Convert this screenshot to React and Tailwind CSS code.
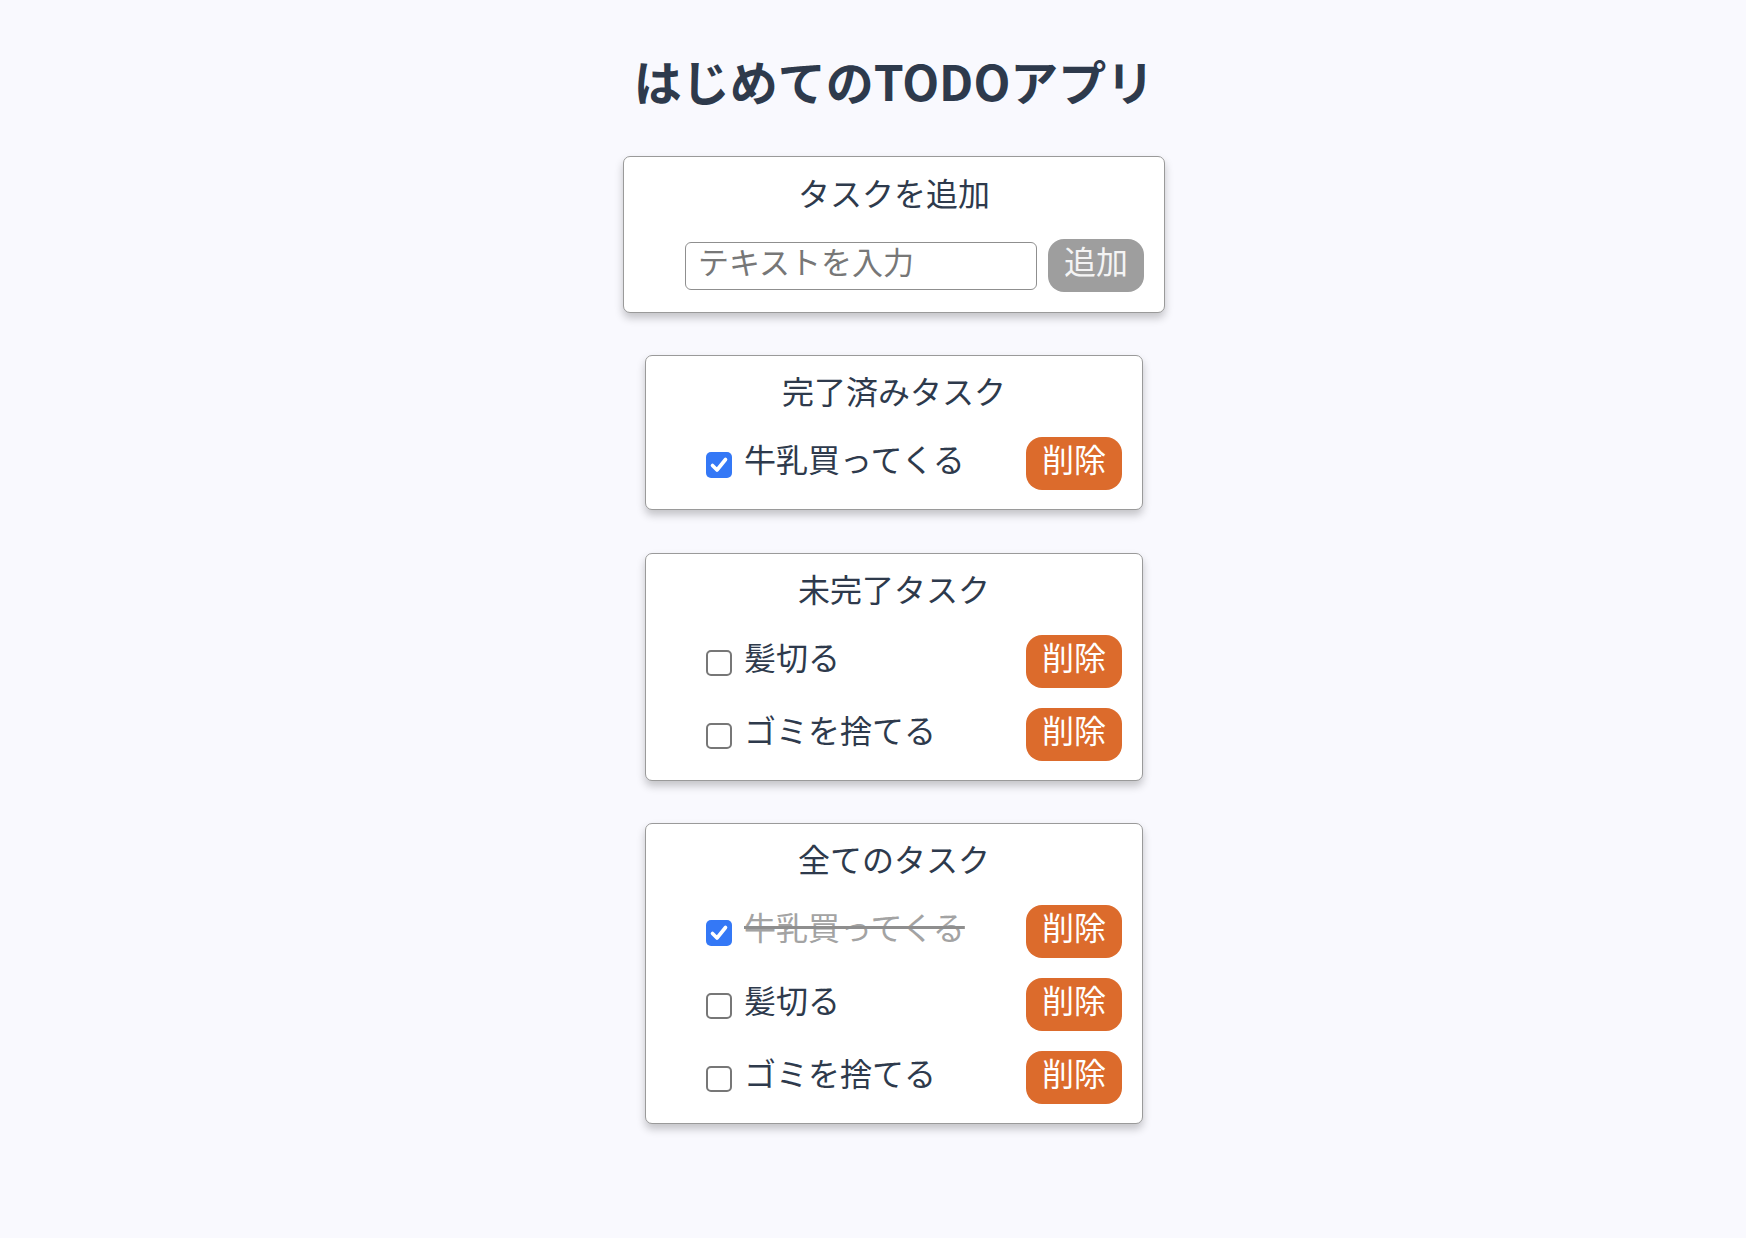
import { useState } from 'react'

const FONT = { fontFamily: '"Noto Sans CJK JP", "Noto Sans", sans-serif' }

const INITIAL_TODOS = [
  { id: 1, text: '牛乳買ってくる', done: true },
  { id: 2, text: '髪切る', done: false },
  { id: 3, text: 'ゴミを捨てる', done: false },
]

function Card({ title, children }) {
  return (
    <section className="w-[498px] bg-white border-[1.5px] border-[#9a9a9a] rounded-[7px] shadow-[0_5px_8px_rgba(0,0,0,0.22)] pt-[10px] pb-[19px]">
      <h2 className="text-center text-[32px] leading-[48px] text-[#2e3a4c] mb-[23px]">{title}</h2>
      <div className="flex flex-col gap-[20px] pl-[60px] pr-[20px]">{children}</div>
    </section>
  )
}

function Checkbox({ checked, onChange }) {
  return (
    <button
      type="button"
      role="checkbox"
      aria-checked={checked}
      onClick={onChange}
      className={`mt-[3px] w-[26px] h-[26px] flex-none rounded-[5px] flex items-center justify-center ${
        checked ? 'bg-[#3478f6]' : 'bg-white border-[2px] border-[#777777]'
      }`}
    >
      {checked && (
        <svg width="22" height="22" viewBox="0 0 22 22" fill="none">
          <path d="M4.5 11.5 L9 16 L17.5 5.5" stroke="white" strokeWidth="3.6" strokeLinecap="round" strokeLinejoin="round" />
        </svg>
      )}
    </button>
  )
}

function TodoRow({ todo, strike, onToggle, onDelete }) {
  const textClass = strike && todo.done
    ? 'text-[#a3a3a3] line-through decoration-[#8e8e8e] decoration-[3px]'
    : 'text-[#2e3a4c]'

  return (
    <div className="flex items-center h-[53px]">
      <Checkbox checked={todo.done} onChange={onToggle} />
      <span className={`ml-[12px] pb-[11px] text-[32px] leading-[48px] ${textClass}`}>{todo.text}</span>
      <button
        type="button"
        onClick={onDelete}
        className="ml-auto w-[96px] h-[53px] pb-[11px] rounded-[16px] bg-[#dc6b2c] text-white text-[32px] leading-[48px] flex items-center justify-center"
      >
        削除
      </button>
    </div>
  )
}

export default function App() {
  const [todos, setTodos] = useState(INITIAL_TODOS)
  const [draft, setDraft] = useState('')

  const toggle = (id) => setTodos((prev) => prev.map((t) => (t.id === id ? { ...t, done: !t.done } : t)))
  const remove = (id) => setTodos((prev) => prev.filter((t) => t.id !== id))
  const add = () => {
    if (!draft.trim()) return
    setTodos((prev) => [...prev, { id: Date.now(), text: draft.trim(), done: false }])
    setDraft('')
  }

  const done = todos.filter((t) => t.done)
  const open = todos.filter((t) => !t.done)

  return (
    <div style={FONT} className="min-h-screen bg-[#f9f9fe] pl-[42px] pt-[44px] pb-[80px] flex flex-col items-center">
      <h1 className="text-[48px] leading-[72px] font-bold text-[#2e3a4c]">はじめてのTODOアプリ</h1>

      <section className="mt-[40px] w-[542px] bg-white border-[1.5px] border-[#9a9a9a] rounded-[7px] shadow-[0_5px_8px_rgba(0,0,0,0.22)] pt-[11px] pb-[20px]">
        <h2 className="text-center text-[32px] leading-[48px] text-[#2e3a4c] mb-[23px]">タスクを追加</h2>
        <div className="flex items-center gap-[11px] pl-[61px] pr-[20px]">
          <input
            type="text"
            value={draft}
            onChange={(e) => setDraft(e.target.value)}
            placeholder="テキストを入力"
            className="w-[352px] h-[48px] border-[1.5px] border-[#8f8f8f] rounded-[6px] pl-[12px] pt-0 pb-[10px] text-[31px] leading-[34px] text-[#2e3a4c] placeholder:text-[#777777] outline-none"
          />
          <button
            type="button"
            onClick={add}
            className="w-[96px] h-[53px] pb-[11px] rounded-[16px] bg-[#9e9e9e] text-[#f4f4f4] text-[32px] leading-[48px] flex items-center justify-center"
          >
            追加
          </button>
        </div>
      </section>

      <div className="mt-[42px]">
        <Card title="完了済みタスク">
          {done.map((t) => (
            <TodoRow key={t.id} todo={t} onToggle={() => toggle(t.id)} onDelete={() => remove(t.id)} />
          ))}
        </Card>
      </div>

      <div className="mt-[43px]">
        <Card title="未完了タスク">
          {open.map((t) => (
            <TodoRow key={t.id} todo={t} onToggle={() => toggle(t.id)} onDelete={() => remove(t.id)} />
          ))}
        </Card>
      </div>

      <div className="mt-[42px]">
        <Card title="全てのタスク">
          {todos.map((t) => (
            <TodoRow key={t.id} todo={t} strike onToggle={() => toggle(t.id)} onDelete={() => remove(t.id)} />
          ))}
        </Card>
      </div>
    </div>
  )
}
